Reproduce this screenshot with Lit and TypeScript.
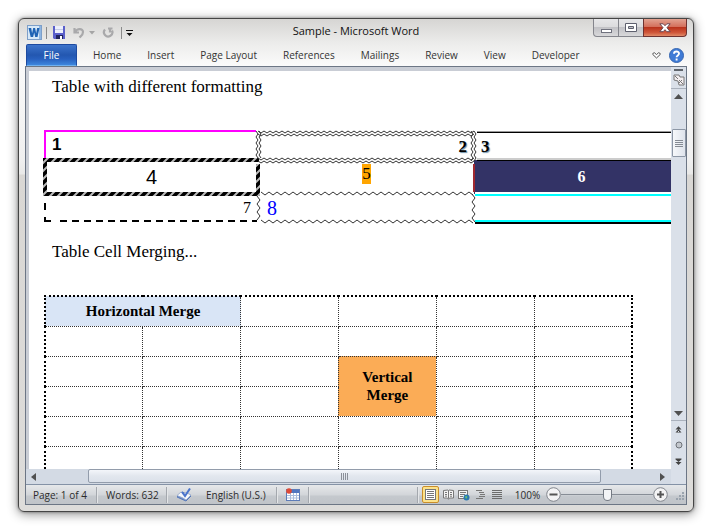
import { LitElement, html, css, svg } from "lit";
import { customElement } from "lit/decorators.js";

/** Points of a zigzag running horizontally or vertically. */
function zigzag(x: number, y: number, length: number, step: number, amp: number, vertical = false): string {
  const points: string[] = [];
  for (let i = 0, d = 0; d <= length; i++, d += step) {
    const off = i % 2 ? amp : 0;
    points.push(vertical ? `${x + off},${y + d}` : `${x + d},${y + off}`);
  }
  return points.join(" ");
}

@customElement("title-bar")
class TitleBar extends LitElement {
  static styles = css`
    :host {
      display: grid;
      grid-template-columns: 1fr auto 1fr;
      height: 25px;
      color: #111;
    }
    button { border: 0; padding: 0; background: none; font: inherit; display: grid; place-items: center; }
    .quick { display: flex; align-items: center; gap: 4px; padding: 2px 0 0 2px; }
    .sep { width: 1px; height: 12px; background: #8a8a8a; }
    .save { margin-left: 1px; }
    .undo { margin-left: 3px; }
    .redo { margin-left: 3px; }
    .end { margin-left: 3px; }
    .title { margin: 0; padding-top: 2px; font-size: 11px; font-weight: 400; line-height: 20px; }
    .controls { display: flex; justify-self: end; align-self: start; }
    .control {
      width: 26px;
      height: 18px;
      border: 1px solid #84858c;
      border-top: 0;
      margin-left: -1px;
      background: linear-gradient(#e6e6e8, #dcdcde 45%, #c2c2c6 50%, #d8d8da);
    }
    .minimize { border-bottom-left-radius: 4px; }
    .close {
      width: 44px;
      border-color: #6e3230;
      border-bottom-right-radius: 4px;
      background: linear-gradient(#e2a291, #d4705c 45%, #b9331c 50%, #d0573a 80%, #e08a68);
    }
  `;
  render() {
    return html`
      <div class="quick">
        <svg width="15" height="15" viewBox="0 0 15 15">
          <rect x=".5" y=".5" width="14" height="14" fill="#d8e9f8" stroke="#7d9fc9" />
          <rect x="12" y="1" width="2" height="13" fill="#8fb6e2" />
          <path d="M1.500 3h2.700l.9 5.200L6.200 3h1.900l1.100 5.200.9-5.200h2.400l-2 9H8.200l-1-4.500-1.100 4.500H3.700z" fill="#1f63b4" />
        </svg>
        <span class="sep"></span>
        <button class="save" aria-label="Save">
          <svg width="14" height="14" viewBox="0 0 14 14">
            <path d="M1 0h12v13H2l-1-1z" fill="#5a5fca" />
            <rect x="3" y="0" width="8" height="7" fill="#eceffc" />
            <rect x="3" y="3" width="8" height="1" fill="#c5cbe8" />
            <rect x="4" y="9" width="7" height="4" fill="#20245c" />
            <rect x="8" y="10" width="2" height="3" fill="#fff" />
          </svg>
        </button>
        <button class="undo" aria-label="Undo">
          <svg width="12" height="12" viewBox="0 0 12 12">
            <path d="M1.500 1v4.500H6M2 5C4 1.500 10 1 10 5c0 3-2 4-3.500 5.500" fill="none" stroke="#a9a9ab" stroke-width="2.200" />
          </svg>
        </button>
        <button aria-label="Undo history">
          <svg width="6" height="4" viewBox="0 0 6 4"><path d="M0 0h6L3 3.500z" fill="#a5a5a5" /></svg>
        </button>
        <button class="redo" aria-label="Repeat">
          <svg width="12" height="12" viewBox="0 0 12 12">
            <path d="M3 2.500a4.200 4.200 0 1 0 7 1M6 1.500h4.500M8 5.500V1" fill="none" stroke="#a9a9ab" stroke-width="2.200" />
          </svg>
        </button>
        <span class="sep end"></span>
        <button aria-label="Customize Quick Access Toolbar">
          <svg width="7" height="6" viewBox="0 0 7 6">
            <path d="M0 0h7v1H0zM.5 3h6L3.500 6z" fill="#111" />
          </svg>
        </button>
      </div>
      <h1 class="title">Sample - Microsoft Word</h1>
      <div class="controls">
        <button class="control minimize" aria-label="Minimize">
          <svg width="12" height="12" viewBox="0 0 12 12">
            <rect x="1.500" y="7.500" width="10" height="3" fill="#fff" stroke="#70727e" />
          </svg>
        </button>
        <button class="control" aria-label="Maximize">
          <svg width="12" height="10" viewBox="0 0 12 10">
            <path d="M.5.5h11v8H.5zM3.500 3.500v2h5v-2z" fill="#fff" fill-rule="evenodd" stroke="#5e606e" />
          </svg>
        </button>
        <button class="control close" aria-label="Close">
          <svg width="12" height="10" viewBox="0 0 12 10">
            <path d="M.8.800h3.400L6 2.700 7.800.800h3.400L8 4.700l3.200 4H7.800L6 6.700l-1.800 2H.8l3.200-4z" fill="#fff" stroke="#6a4550" />
          </svg>
        </button>
      </div>
    `;
  }
}

@customElement("ribbon-tabs")
class RibbonTabs extends LitElement {
  static styles = css`
    :host { display: flex; align-items: stretch; height: 22px; padding-left: 1px; }
    button { border: 0; padding: 0; background: none; font: inherit; color: #333; }
    .file {
      width: 51px;
      border: 1px solid #1d4aa0;
      border-bottom-color: #6fb0ee;
      border-radius: 2px 2px 0 0;
      color: #fff;
      background: linear-gradient(#3d74cb, #2357b0 50%, #2860be 70%, #3d86dd);
    }
    .tabs { display: flex; flex: 1; padding-left: 3px; }
    .tab { padding: 0 13px; white-space: nowrap; }
    .tools { display: flex; align-items: center; gap: 8px; padding-right: 3px; }
    .tools button { display: grid; }
  `;
  render() {
    const tabs = ["Home", "Insert", "Page Layout", "References", "Mailings", "Review", "View", "Developer"];
    return html`
      <button class="file">File</button>
      <nav class="tabs">${tabs.map((t) => html`<button class="tab">${t}</button>`)}</nav>
      <div class="tools">
        <button aria-label="Minimize the Ribbon">
          <svg width="9" height="7" viewBox="0 0 9 7">
            <path d="M.8 1.500 2.300.700l2.200 1.800L6.700.700l1.500.8v1L4.500 6 .8 2.500z" fill="#fff" stroke="#555" />
          </svg>
        </button>
        <button aria-label="Help">
          <svg width="15" height="15" viewBox="0 0 15 15">
            <circle cx="7.500" cy="7.500" r="7" fill="#3f7bd6" stroke="#3766b0" />
            <path d="M5 5.800C5 2.800 10 2.800 10 5.600 10 7.400 7.600 7.400 7.600 9.300M7.600 10.500v2" fill="none" stroke="#fff" stroke-width="1.900" />
          </svg>
        </button>
      </div>
    `;
  }
}

@customElement("doc-page")
class DocPage extends LitElement {
  static styles = css`
    :host {
      display: block;
      overflow: hidden;
      background: #fff;
      padding: 6px 0 0 15px;
      font-family: "Liberation Serif", serif;
      font-size: 17px;
      color: #000;
    }
    p { margin: 0; padding-left: 8px; line-height: 20px; }
    table { border-collapse: collapse; table-layout: fixed; }
    .formats { position: relative; width: 645px; margin: 33px 0 20px; }
    .formats svg { position: absolute; inset: 0; overflow: visible; }
    .formats table { width: 645px; }
    .formats td { padding: 0 8px; line-height: 20px; }
    .r1 { height: 30px; }
    .r2 { height: 34px; }
    .r3 { height: 28px; }
    .formats .low { padding: 4px 7px 0; }
    .sans { font-family: "Liberation Sans", sans-serif; }
    .b { font-weight: 700; }
    .center { text-align: center; }
    .right { text-align: right; }
    .big { font-size: 20px; }
    .small { font-size: 16px; }
    .shadow { text-shadow: 1px 1px 1px #6b8fa8; }
    .top { vertical-align: top; }
    .mark { display: inline-block; margin-top: 4px; background: #ffa500; color: #000; }
    .navy { background: #333366; color: #fff; }
    .blue { color: #00f; }
    .merge { width: 589px; margin-top: 33px; border: 2px dotted #000; }
    .merge td {
      height: 30px;
      box-sizing: border-box;
      padding: 0;
      border: 1px dotted #333;
      font-size: 15px;
      line-height: 18px;
      text-align: center;
      font-weight: 700;
    }
    .merge .h { background: #d9e5f6; }
    .merge .v { background: #fbac56; }
  `;
  private borders() {
    const thin = (pts: string) =>
      svg`<polyline points=${pts} fill="none" stroke="#333" stroke-width="1" />`;
    return html`
      <svg width="645" height="94" aria-hidden="true">
        <defs>
          <pattern id="hatch" width="8" height="8" patternUnits="userSpaceOnUse">
            <rect width="8" height="8" fill="#000" />
            <path d="M-1 9 9 -1M-5 5 5 -5M3 13 13 3" stroke="#bbb" stroke-width="2" />
          </pattern>
        </defs>
        <path d="M1 29V1H212" fill="none" stroke="#f0f" stroke-width="2" />
        <path d="M215 32v-4H-1v38h217V34h-4v28H3V32z" fill="url(#hatch)" />
        <path d="M1 73v7M1 87v4h6" fill="none" stroke="#000" stroke-width="2" />
        <path d="M16 91H213" stroke="#000" stroke-width="2" stroke-dasharray="7 5" />
        ${thin(zigzag(214, 1, 216, 3, 2))} ${thin(zigzag(214, 4, 216, 3, 2))}
        ${thin(zigzag(214, 28, 216, 3, 2))} ${thin(zigzag(214, 31, 216, 3, 2))}
        ${thin(zigzag(212, 1, 28, 3, 2, true))} ${thin(zigzag(215, 1, 28, 3, 2, true))}
        ${thin(zigzag(427, 1, 30, 3, 2, true))} ${thin(zigzag(430, 1, 30, 3, 2, true))}
        ${thin(zigzag(217, 62, 212, 4, 3))} ${thin(zigzag(217, 90, 212, 4, 3))}
        ${thin(zigzag(213, 66, 26, 4, 3, true))} ${thin(zigzag(428, 64, 28, 4, 3, true))}
        <path d="M433 1.500H645M433 29H645" stroke="#999" stroke-width="1" />
        <path d="M433 2.500H645M433 30.500H645" stroke="#000" stroke-width="1" />
        <path d="M430 34v28" stroke="#a02830" stroke-width="2" />
        <path d="M431 63H645" stroke="#fff" stroke-width="2" />
        <path d="M431 65H645M431 91H645" stroke="#0ff" stroke-width="2" />
        <path d="M431 93H645" stroke="#000" stroke-width="2" />
      </svg>
    `;
  }
  render() {
    const blank = (n: number) => Array.from({ length: n }, () => html`<td></td>`);
    return html`
      <p>Table with different formatting</p>
      <div class="formats">
        <table>
          <tr class="r1">
            <td class="sans b">1</td>
            <td class="b right shadow low">2</td>
            <td class="b shadow low">3</td>
          </tr>
          <tr class="r2">
            <td class="sans big center">4</td>
            <td class="center top"><span class="mark">5</span></td>
            <td class="small b center navy">6</td>
          </tr>
          <tr class="r3">
            <td class="small right">7</td>
            <td class="big blue">8</td>
            <td></td>
          </tr>
        </table>
        ${this.borders()}
      </div>
      <p>Table Cell Merging...</p>
      <table class="merge">
        <tr><td class="h" colspan="2">Horizontal Merge</td>${blank(4)}</tr>
        <tr>${blank(6)}</tr>
        <tr>${blank(3)}<td class="v" rowspan="2">Vertical<br />Merge</td>${blank(2)}</tr>
        <tr>${blank(5)}</tr>
        <tr>${blank(6)}</tr>
        <tr>${blank(6)}</tr>
        <tr>${blank(6)}</tr>
      </table>
    `;
  }
}

@customElement("vertical-scroll")
class VerticalScroll extends LitElement {
  static styles = css`
    :host { display: flex; flex-direction: column; align-items: center; width: 15px; background: #dae0e9; }
    button { border: 0; padding: 0; background: none; display: grid; place-items: center; width: 15px; }
    .split { width: 9px; height: 2px; margin-top: 2px; background: #5f646b; }
    .ruler { height: 18px; border-bottom: 1px solid #aab1bc; }
    .up { height: 15px; }
    .track { flex: 1; display: flex; flex-direction: column; padding-top: 25px; }
    .thumb {
      box-sizing: border-box;
      width: 14px;
      height: 28px;
      border: 1px solid #8d97a6;
      border-radius: 1px;
      background: linear-gradient(90deg, #f6f8fb, #dfe4ec);
      display: grid;
      place-items: center;
    }
    .down { height: 15px; border-bottom: 1px solid #aab1bc; }
    .nav { height: 16px; }
    .last { margin-bottom: 15px; }
  `;
  render() {
    return html`
      <div class="split"></div>
      <button class="ruler" aria-label="View Ruler">
        <svg width="12" height="12" viewBox="0 0 12 12">
          <path d="M1 1h5l1 2h4v8H6L5 7 1 6z" fill="#f3eef0" stroke="#777" />
          <path d="m2 2 3 3M6 6l4 4M9 6l-3 3" stroke="#777" />
        </svg>
      </button>
      <button class="up" aria-label="Scroll up">
        <svg width="9" height="5" viewBox="0 0 9 5"><path d="M0 5h9L4.500 0z" fill="#505050" /></svg>
      </button>
      <div class="track">
        <div class="thumb">
          <svg width="8" height="7" viewBox="0 0 8 7">
            <path d="M0 .5h8M0 2.500h8M0 4.500h8M0 6.500h8" stroke="#858b94" />
          </svg>
        </div>
      </div>
      <button class="down" aria-label="Scroll down">
        <svg width="9" height="5" viewBox="0 0 9 5"><path d="M0 0h9L4.500 5z" fill="#505050" /></svg>
      </button>
      <button class="nav" aria-label="Previous Page">
        <svg width="7" height="7" viewBox="0 0 7 7">
          <path d="M.5 3.500h6L3.500.300zM.5 6.500h6L3.500 3.300zM3 5h1v2H3z" fill="#444" />
        </svg>
      </button>
      <button class="nav" aria-label="Select Browse Object">
        <svg width="8" height="8" viewBox="0 0 8 8"><circle cx="4" cy="4" r="3" fill="#c4c8ce" stroke="#6d7178" /></svg>
      </button>
      <button class="nav last" aria-label="Next Page">
        <svg width="7" height="7" viewBox="0 0 7 7">
          <path d="M.5.500h6v1h-6zM.5 1.500h6l-3 2.500zM.5 4h6l-3 3z" fill="#444" />
        </svg>
      </button>
    `;
  }
}

@customElement("horizontal-scroll")
class HorizontalScroll extends LitElement {
  static styles = css`
    :host { display: flex; height: 15px; background: #d3dae4; }
    button { border: 0; padding: 0; background: none; display: grid; place-items: center; }
    .left { width: 14px; }
    .right { width: 17px; }
    .track { flex: 1; display: flex; padding: 0 53px 0 48px; }
    .thumb {
      flex: 1;
      box-sizing: border-box;
      height: 14px;
      border: 1px solid #929cab;
      border-radius: 2px;
      background: linear-gradient(#f3f6fa, #e2e7ee 50%, #dbe1ea);
      display: grid;
      place-items: center;
    }
  `;
  render() {
    return html`
      <button class="left" aria-label="Scroll left">
        <svg width="5" height="8" viewBox="0 0 5 8"><path d="M5 0v8L0 4z" fill="#505050" /></svg>
      </button>
      <div class="track">
        <div class="thumb">
          <svg width="7" height="7" viewBox="0 0 7 7"><path d="M.5 0v7M2.500 0v7M4.500 0v7M6.500 0v7" stroke="#8b9099" /></svg>
        </div>
      </div>
      <button class="right" aria-label="Scroll right">
        <svg width="5" height="8" viewBox="0 0 5 8"><path d="M0 0v8l5-4z" fill="#505050" /></svg>
      </button>
    `;
  }
}

@customElement("status-bar")
class StatusBar extends LitElement {
  static styles = css`
    :host {
      display: flex;
      align-items: center;
      height: 19px;
      padding-left: 7px;
      border-top: 1px solid #8492a6;
      color: #2c2c2c;
      background: linear-gradient(#e6e8ea, #d3d6da 50%, #c4c8cd 60%, #c0c4c9);
    }
    button { border: 0; padding: 0; background: none; font: inherit; color: inherit; display: grid; place-items: center; white-space: nowrap; }
    .sep { width: 1px; height: 16px; margin: 0 9px 0 8px; background: #a4a8ae; box-shadow: 1px 0 #e4e6e8; }
    .text { justify-content: start; }
    .page { width: 55px; }
    .words { width: 52px; }
    .lang { width: 62px; margin-left: 14px; }
    .grow { flex: 1; }
    .last { margin-right: 4px; }
    .views { display: flex; align-items: center; gap: 4px; }
    .on { width: 17px; height: 17px; border: 1px solid #c98e2b; border-radius: 2px; background: #fce28a; }
    .zoom { width: 27px; margin: 0 5px 0 11px; }
    .slider { display: flex; align-items: center; }
    input {
      appearance: none;
      width: 92px;
      height: 14px;
      margin: 0;
      background: linear-gradient(#878d96, #878d96) center / 100% 1px no-repeat;
    }
    input::-webkit-slider-thumb {
      appearance: none;
      width: 9px;
      height: 12px;
      background: #f3f4f6;
      border: 1px solid #747a83;
      border-radius: 1px 1px 5px 5px;
    }
    .grip { margin: 5px 1px 0 7px; }
  `;
  render() {
    return html`
      <button class="text page">Page: 1 of 4</button>
      <span class="sep"></span>
      <button class="text words">Words: 632</button>
      <span class="sep"></span>
      <button aria-label="Proofing">
        <svg width="16" height="14" viewBox="0 0 16 14">
          <path d="m1 9 5-5 9 4-5 5z" fill="#6d8fce" stroke="#5577b8" />
          <path d="m1 7.500 4-3.500 3 1.500 2-1 5 2.500-5 5-3-2z" fill="#f5f7fb" stroke="#8fa3c8" stroke-width=".8" />
          <path d="m6 4 3 4 5-7.500" fill="none" stroke="#4a74cc" stroke-width="2" />
        </svg>
      </button>
      <button class="text lang">English (U.S.)</button>
      <span class="sep"></span>
      <button aria-label="Record Macro">
        <svg width="14" height="13" viewBox="0 0 14 13">
          <rect x=".5" y="1.500" width="13" height="11" fill="#fff" stroke="#5d7cb8" />
          <rect x="1" y="2" width="12" height="3" fill="#5076c0" />
          <path d="M1 7.500h12M1 10h12M4.500 5v7M7.500 5v7M10.500 5v7" stroke="#a9bcdc" />
          <circle cx="3" cy="3" r="2.800" fill="#df4a36" />
        </svg>
      </button>
      <span class="sep"></span>
      <span class="grow"></span>
      <span class="sep last"></span>
      <div class="views">
        <button class="on" aria-label="Print Layout">
          <svg width="11" height="11" viewBox="0 0 11 11">
            <rect x=".5" y=".5" width="10" height="10" fill="#fff" stroke="#777" />
            <path d="M2 2.500h7M2 4.500h7M2 6.500h7M2 8.500h7" stroke="#777" />
          </svg>
        </button>
        <button aria-label="Full Screen Reading">
          <svg width="11" height="11" viewBox="0 0 11 11">
            <path d="M.5 1.500 5 1l.5.500L6 1l4.500.500V9H6.500l-1 1.300L4.500 9h-4z" fill="#f4f4f4" stroke="#777" />
            <path d="M5.500 1.500v8M2 3.500h2M2 5.500h2M2 7.200h2M7 3.500h2M7 5.500h2M7 7.200h2" stroke="#777" />
          </svg>
        </button>
        <button aria-label="Web Layout">
          <svg width="12" height="12" viewBox="0 0 12 12">
            <rect x=".5" y="1.500" width="9" height="8" fill="#f4f4f4" stroke="#777" />
            <path d="M2 3.500h6M2 5.500h5M2 7.500h3" stroke="#777" />
            <circle cx="8.500" cy="8.500" r="3" fill="#2a78b0" />
            <path d="M7 7.500 8.500 7 9.500 8 8 10z" fill="#6cc46a" />
          </svg>
        </button>
        <button aria-label="Outline">
          <svg width="12" height="10" viewBox="0 0 12 10">
            <path d="M2 .5h6M5 2.500h5M6 4.500h5M5 6.500h6M2 8.500h7" stroke="#777" />
          </svg>
        </button>
        <button aria-label="Draft">
          <svg width="13" height="10" viewBox="0 0 13 10">
            <path d="M2 .5h10M2 2.500h10M2 4.500h10M2 6.500h10M2 8.500h10" stroke="#6c6c6c" />
          </svg>
        </button>
      </div>
      <button class="zoom">100%</button>
      <div class="slider">
        <button aria-label="Zoom Out">
          <svg width="15" height="15" viewBox="0 0 15 15">
            <circle cx="7.500" cy="7.500" r="6.800" fill="#f3f3f4" stroke="#83878e" />
            <path d="M3.500 7.500h8" stroke="#555" stroke-width="2" />
          </svg>
        </button>
        <input type="range" min="0" max="100" value="50" aria-label="Zoom" />
        <button aria-label="Zoom In">
          <svg width="15" height="15" viewBox="0 0 15 15">
            <circle cx="7.500" cy="7.500" r="6.800" fill="#f3f3f4" stroke="#83878e" />
            <path d="M4 7.500h7M7.500 4v7" stroke="#555" stroke-width="2" />
          </svg>
        </button>
      </div>
      <svg class="grip" width="10" height="10" viewBox="0 0 10 10">
        <path d="M7 0h2v2H7zM4 3h2v2H4zM7 3h2v2H7zM1 6h2v2H1zM4 6h2v2H4zM7 6h2v2H7z" fill="#9aa3ad" />
      </svg>
    `;
  }
}

@customElement("app-root")
class AppRoot extends LitElement {
  static styles = css`
    :host {
      display: flex;
      box-sizing: border-box;
      height: 100vh;
      padding: 18px;
      background: #fff;
      font-family: "Open Sans", "Noto Sans", sans-serif;
      font-size: 10px;
    }
    .window {
      flex: 1;
      min-width: 0;
      display: flex;
      flex-direction: column;
      box-sizing: border-box;
      padding: 0 6px 6px;
      border: 1px solid #454545;
      border-radius: 6px;
      background: linear-gradient(#d6d5d3, #ececeb 24px, #fafafa 46px, #f0f0f0 140px, #e9e9e8 155px, #d9d7d4 156px, #dddcda);
      box-shadow: 0 0 3px rgba(0, 0, 0, 0.4), 0 2px 11px rgba(0, 0, 0, 0.45);
    }
    .panel {
      flex: 1;
      min-height: 0;
      display: flex;
      flex-direction: column;
      border: 1px solid #6c7685;
    }
    .work { flex: 1; min-height: 0; display: flex; }
    .main { flex: 1; min-width: 0; display: flex; flex-direction: column; }
    .canvas { flex: 1; min-height: 0; display: flex; padding: 4px 0 0 3px; background: #c9cdd5; }
    doc-page { flex: 1; min-width: 0; }
  `;
  render() {
    return html`
      <div class="window">
        <title-bar></title-bar>
        <ribbon-tabs></ribbon-tabs>
        <div class="panel">
          <div class="work">
            <div class="main">
              <div class="canvas"><doc-page></doc-page></div>
              <horizontal-scroll></horizontal-scroll>
            </div>
            <vertical-scroll></vertical-scroll>
          </div>
          <status-bar></status-bar>
        </div>
      </div>
    `;
  }
}
